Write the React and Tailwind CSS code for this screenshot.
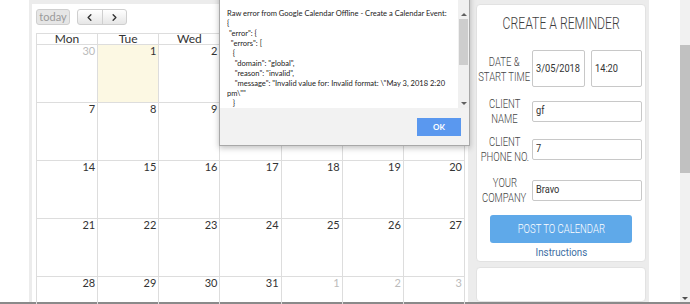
import React from 'react'
import { ChevronLeft, ChevronRight } from 'lucide-react'

const weeks = [
    [[30, true], [1], [2], [3], [4], [5], [6]],
    [[7], [8], [9], [10], [11], [12], [13]],
    [[14], [15], [16], [17], [18], [19], [20]],
    [[21], [22], [23], [24], [25], [26], [27]],
    [[28], [29], [30], [31], [1, true], [2, true], [3, true]],
]

const dayNames = ['Mon', 'Tue', 'Wed', 'Thu', 'Fri', 'Sat', 'Sun']

const errorLines = [
    'Raw error from Google Calendar Offline - Create a Calendar Event:',
    '{',
    ' "error": {',
    '  "errors": [',
    '   {',
    '    "domain": "global",',
    '    "reason": "invalid",',
    '    "message": "Invalid value for: Invalid format: \\"May 3, 2018 2:20',
    'pm\\""',
    '   }',
]

// narrow light face standing in for the condensed theme font
const dosis = "font-['Roboto',sans-serif] font-light"

function Narrow({ children, className = 'scale-x-[0.8]', origin = 'origin-center' }) {
    return <span className={`inline-block whitespace-nowrap ${origin} ${className}`}>{children}</span>
}

function Calendar() {
    return (
        <div className="relative w-[436px] bg-white pl-[4px] pt-[5px] font-['Lato',sans-serif]">

            {/* TOOLBAR */}
            <div className="flex items-center gap-[7px] h-[16px]">
                <div className="h-[16px] w-[34px] flex items-center justify-center rounded-[3px] border border-[#cfcfcf] bg-[#e6e6e6] text-[11px] text-[#9a9a9a]">
                    today
                </div>
                <div className="flex h-[16px] w-[50px] rounded-[3px] border border-[#cfcfcf] bg-gradient-to-b from-white to-[#e6e6e6]">
                    <div className="flex-1 flex items-center justify-center border-r border-[#cfcfcf]">
                        <ChevronLeft size={11} strokeWidth={3} className="text-[#333]" />
                    </div>
                    <div className="flex-1 flex items-center justify-center">
                        <ChevronRight size={11} strokeWidth={3} className="text-[#333]" />
                    </div>
                </div>
            </div>

            {/* GRID */}
            <div className="mt-[8px] w-[429px] border-l border-t border-[#dddddd]">
                <div className="grid grid-cols-7">
                    {dayNames.map((d) => (
                        <div key={d} className="h-[10px] border-r border-[#dddddd] text-center text-[12px] leading-[10px] text-[#333]">
                            {d}
                        </div>
                    ))}
                </div>
                {weeks.map((week, wi) => (
                    <div key={wi} className="grid grid-cols-7 border-t border-[#dddddd]">
                        {week.map(([n, other], di) => (
                            <div
                                key={di}
                                className={`h-[57px] border-r border-[#dddddd] text-right pr-[2px] text-[11px] leading-[11px] ${wi === 0 && di === 1 ? 'bg-[#fcf8e3]' : ''} ${other ? 'text-[#bbbbbb]' : 'text-[#333]'}`}
                            >
                                {n}
                            </div>
                        ))}
                    </div>
                ))}
            </div>

            {/* ERROR DIALOG */}
            <div className="absolute left-[187px] top-[-24px] w-[251px] border border-[#a8a8a8] bg-white shadow-[0_2px_6px_rgba(0,0,0,0.25)] font-['Lato',sans-serif]">
                <div className="flex h-[127px]">
                    <div className="flex-1 min-w-0 overflow-hidden pl-[7px] pt-[27px]">
                        <div className="origin-left scale-x-[0.9] text-[8.4px] leading-[10px] text-[#222] whitespace-pre">
                            {errorLines.map((l, i) => <div key={i}>{l}</div>)}
                        </div>
                    </div>
                    <div className="w-[11px] shrink-0 flex flex-col bg-[#f0f0f0] pt-[29px]">
                        <div className="h-[8px] flex items-center justify-center">
                            <div className="w-0 h-0 border-l-[3px] border-r-[3px] border-b-[3px] border-l-transparent border-r-transparent border-b-[#606060]" />
                        </div>
                        <div className="mt-[1px] mx-[1px] h-[46px] bg-[#cdcdcd]" />
                        <div className="flex-1" />
                        <div className="h-[9px] flex items-center justify-center">
                            <div className="w-0 h-0 border-l-[3px] border-r-[3px] border-t-[3px] border-l-transparent border-r-transparent border-t-[#606060]" />
                        </div>
                    </div>
                </div>
                <div className="h-[37px] bg-[#f2f2f2] flex items-center justify-end pr-[8px]">
                    <div className="w-[44px] h-[18px] bg-[#5a98ef] flex items-center justify-center text-[8px] font-bold text-white">
                        OK
                    </div>
                </div>
            </div>
        </div>
    )
}

function Field({ labelTop, labelBottom, children, className }) {
    return (
        <div className={`flex items-center ${className}`}>
            <div className={`w-[55px] shrink-0 flex flex-col items-center text-[12.5px] leading-[15px] text-[#444] ${dosis}`}>
                <Narrow className="scale-x-[0.76]">{labelTop}</Narrow>
                <Narrow className="scale-x-[0.76]">{labelBottom}</Narrow>
            </div>
            {children}
        </div>
    )
}

function Input({ value, className }) {
    return (
        <div className={`flex items-center pl-[3px] border border-[#c8c8c8] rounded-[2px] bg-white text-[10.5px] text-[#333] font-['Roboto',sans-serif] ${className}`}>
            <Narrow className="scale-x-[0.88]" origin="origin-left">{value}</Narrow>
        </div>
    )
}

function Reminder() {
    return (
        <div className="w-[170px] flex flex-col gap-[5px]">
            <div className="h-[258px] bg-white rounded-[4px] border border-[#e2e2e2] pt-[9px]">
                <p className={`text-center text-[16.5px] leading-[20px] text-[#3d3d3d] ${dosis}`}>
                    <Narrow className="scale-x-[0.74]">CREATE A REMINDER</Narrow>
                </p>

                <Field labelTop="DATE &" labelBottom="START TIME" className="mt-[16px] h-[37px]">
                    <Input value="3/05/2018" className="w-[53px] h-[37px]" />
                    <Input value="14:20" className="ml-[6px] w-[51px] h-[37px]" />
                </Field>
                <Field labelTop="CLIENT" labelBottom="NAME" className="mt-[9px] h-[30px]">
                    <Input value="gf" className="w-[110px] h-[21px]" />
                </Field>
                <Field labelTop="CLIENT" labelBottom="PHONE NO." className="mt-[8px] h-[30px]">
                    <Input value="7" className="w-[110px] h-[21px]" />
                </Field>
                <Field labelTop="YOUR" labelBottom="COMPANY" className="mt-[11px] h-[30px]">
                    <Input value="Bravo" className="w-[110px] h-[21px]" />
                </Field>

                <div className={`mx-auto mt-[10px] w-[142px] h-[28px] rounded-[3px] bg-[#5fa9e9] flex items-center justify-center text-[12.5px] text-white ${dosis}`}>
                    <Narrow className="scale-x-[0.76]">POST TO CALENDAR</Narrow>
                </div>
                <p className={`mt-[2px] text-center text-[11.5px] leading-[14px] text-[#3b6ea3] font-['Roboto',sans-serif]`}>
                    <Narrow className="scale-x-[0.85]">Instructions</Narrow>
                </p>
            </div>
            <div className="flex-1 bg-white rounded-[4px] border border-[#e2e2e2]" />
        </div>
    )
}

export default function App() {
    return (
        <div className="w-[690px] h-[304px] overflow-hidden bg-white flex flex-col">
            <div className="flex h-[302px]">
                <div className="w-[29px]" />
                <div className="w-[620px] bg-[#ececec] flex gap-[8px] pl-[3px] pt-[4px]">
                    <Calendar />
                    <Reminder />
                </div>
                <div className="w-[31px]" />
                <div className="w-[10px] bg-[#f1f1f1] flex flex-col">
                    <div className="mt-[45px] h-[128px] bg-[#c1c1c1]" />
                    <div className="flex-1" />
                    <div className="h-[8px] flex items-center justify-center">
                        <div className="w-0 h-0 border-l-[3px] border-r-[3px] border-t-[3px] border-l-transparent border-r-transparent border-t-[#505050]" />
                    </div>
                </div>
            </div>
            <div className="h-[2px] bg-[#8a8a8a]" />
        </div>
    )
}
